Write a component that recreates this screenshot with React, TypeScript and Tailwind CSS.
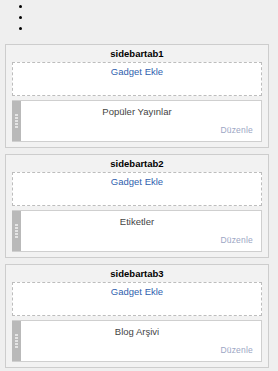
import React from 'react';

const sections = [
  { name: 'sidebartab1', widget: 'Popüler Yayınlar' },
  { name: 'sidebartab2', widget: 'Etiketler' },
  { name: 'sidebartab3', widget: 'Blog Arşivi' },
];

// drag handle on the left of each widget
const Handle: React.FC = () => (
  <div className="w-[9px] shrink-0 bg-[#b9b9b9] flex flex-col items-center pt-[13px] gap-[1px]">
    {[0, 1, 2, 3, 4].map((i) => (
      <div key={i} className="w-[3px] h-[2px] bg-[#e4e4e4]" />
    ))}
  </div>
);

const Section: React.FC<{ name: string; widget: string }> = ({ name, widget }) => (
  <div className="border border-[#cdcdcd] bg-[#f2f2f2] px-[6px] pb-[5px]">
    <div className="h-[17px] flex items-center justify-center pt-[2px] text-[9.5px] font-bold text-black">
      {name}
    </div>
    <div className="h-[34px] border border-dashed border-[#bdbdbd] bg-white flex justify-center pt-[3px]">
      <span className="text-[9.5px] text-[#2f5fae] leading-[12px]">Gadget Ekle</span>
    </div>
    <div className="mt-[4px] h-[42px] border border-[#cfcfcf] border-l-0 bg-white flex">
      <Handle />
      <div className="flex-1 flex flex-col items-center pt-[5px] pr-[8px]">
        <span className="text-[9.5px] text-[#444] leading-[12px]">{widget}</span>
        <span className="self-end mt-auto mb-[6px] text-[8.5px] text-[#9ba6c4] leading-[10px] tracking-[0.2px]">Düzenle</span>
      </div>
    </div>
  </div>
);

export default function App() {
  return (
    <div className="w-[278px] h-[371px] bg-[#efefef] overflow-hidden" style={{ fontFamily: '"Liberation Sans", Arial, sans-serif' }}>
      <div className="pl-[19px] pt-[5px] flex flex-col gap-[8px]">
        {[0, 1, 2].map((i) => (
          <div key={i} className="w-[3px] h-[3px] rounded-full bg-black" />
        ))}
      </div>
      <div className="mt-[14px] ml-[5px] w-[264px] flex flex-col gap-[6px]">
        {sections.map((s) => (
          <Section key={s.name} name={s.name} widget={s.widget} />
        ))}
      </div>
    </div>
  );
}
